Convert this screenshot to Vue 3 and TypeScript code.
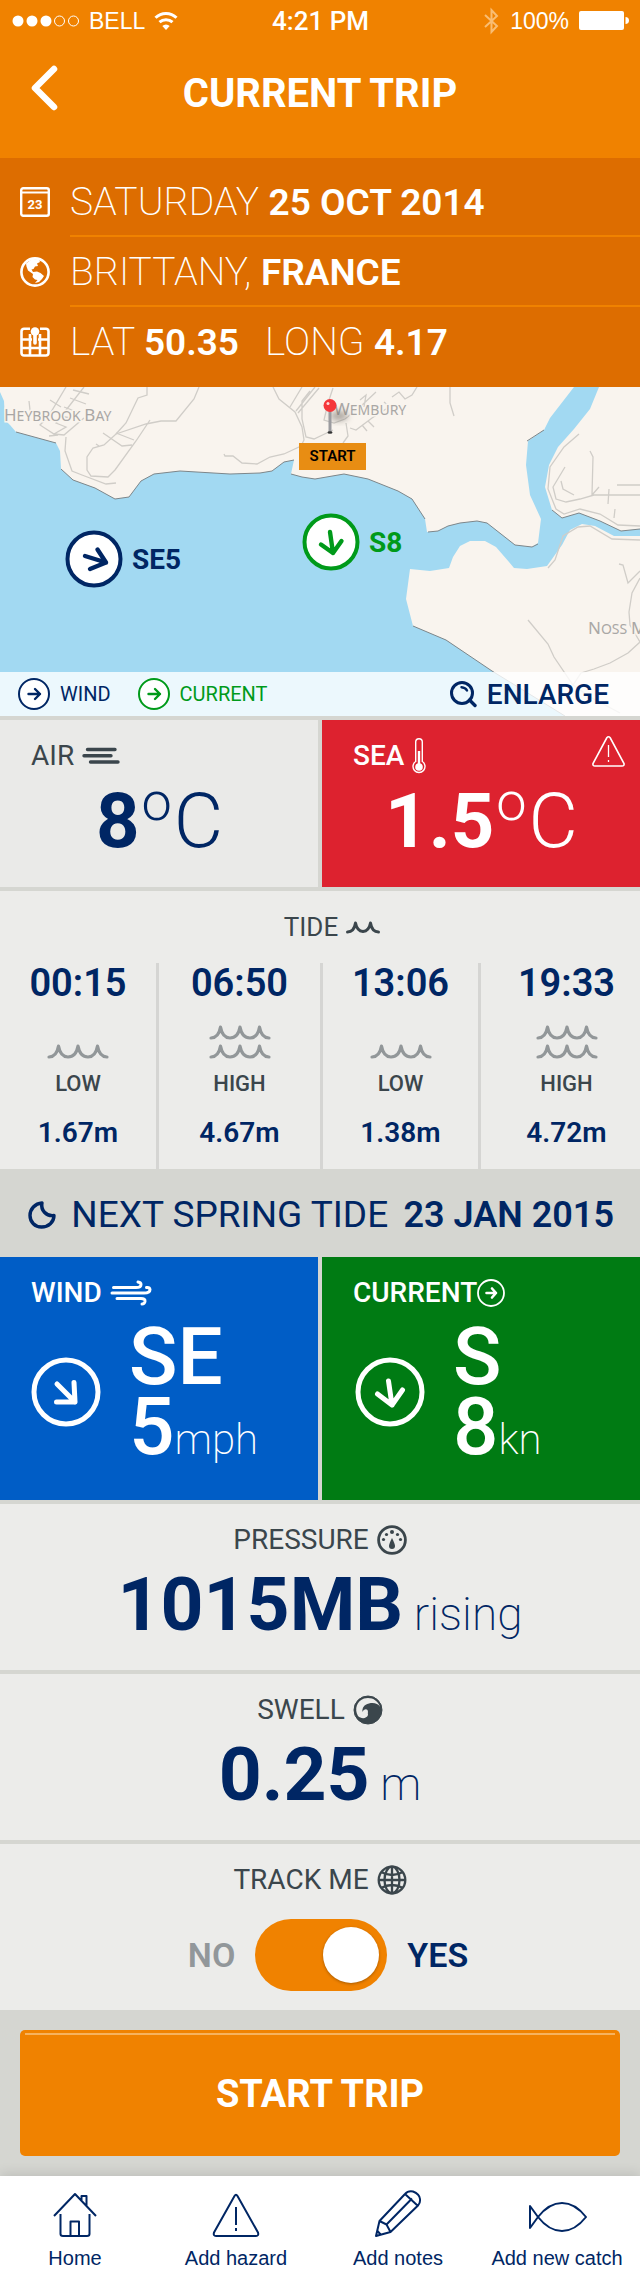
<script setup lang="ts">
import { ref } from 'vue'

interface Tide {
  time: string
  level: 'LOW' | 'HIGH'
  height: string
}

const tides: Tide[] = [
  { time: '00:15', level: 'LOW', height: '1.67m' },
  { time: '06:50', level: 'HIGH', height: '4.67m' },
  { time: '13:06', level: 'LOW', height: '1.38m' },
  { time: '19:33', level: 'HIGH', height: '4.72m' },
]

const tracking = ref(true)
</script>

<template>
  <div class="screen">
    <header class="top">
      <div class="status">
        <div class="status-left">
          <svg class="dots" width="68" height="16" viewBox="0 0 68 16">
            <g fill="#fff"><circle cx="6" cy="8" r="5.5" /><circle cx="20" cy="8" r="5.5" /><circle cx="34" cy="8" r="5.5" /></g>
            <g fill="none" stroke="#fff" stroke-width="1"><circle cx="47.500" cy="8" r="5" /><circle cx="61.500" cy="8" r="5" /></g>
          </svg>
          <span>BELL</span>
          <svg width="24" height="20" viewBox="0 0 24 20">
            <g fill="none" stroke="#fff" stroke-width="3">
              <path d="M1.500 6.800A15 15 0 0 1 22.500 6.800" />
              <path d="M5.500 11.200A9.500 9.500 0 0 1 18.500 11.200" />
            </g>
            <path d="M8.300 15A5.200 5.200 0 0 1 15.700 15L12 19z" fill="#fff" />
          </svg>
        </div>
        <div class="clock">4:21 PM</div>
        <div class="status-right">
          <svg width="17" height="28" viewBox="0 0 17 28" fill="none" stroke="#f9bd73" stroke-width="2">
            <path d="M2 8L14 19L8.500 25V3L14 9L2 20" />
          </svg>
          <span>100%</span>
          <svg width="50" height="20" viewBox="0 0 50 20" fill="#fff">
            <rect x="0" y="0" width="45" height="19" rx="2" />
            <path d="M46.500 6a3.300 3.300 0 0 1 0 7z" />
          </svg>
        </div>
      </div>
      <div class="title-bar">
        <button class="back" type="button" aria-label="Back">
          <svg width="28" height="46" viewBox="0 0 28 46" fill="none" stroke="#fff" stroke-width="6.500" stroke-linecap="round" stroke-linejoin="round">
            <path d="M24 4L5 23L24 42" />
          </svg>
        </button>
        <h1>CURRENT TRIP</h1>
      </div>
    </header>

    <section class="details">
      <div class="detail">
        <svg class="detail-icon" width="30" height="30" viewBox="0 0 30 30">
          <rect x="1.200" y="1.200" width="27.600" height="27.600" rx="2" fill="none" stroke="#fff" stroke-width="2.400" />
          <path d="M2 5.500H28" stroke="#fff" stroke-width="2" />
          <text x="15" y="22" text-anchor="middle" class="day">23</text>
        </svg>
        <p>SATURDAY <b>25 OCT 2014</b></p>
      </div>
      <div class="detail">
        <svg class="detail-icon" width="30" height="30" viewBox="0 0 30 30">
          <circle cx="15" cy="15" r="13.600" fill="none" stroke="#fff" stroke-width="2.600" />
          <path fill="#fff" d="M6 6.500L12 2L19 2.500L20 5L17 6.500L18 9L15 9.500L13.500 12L11.500 12.500L13 15L17 14.500L20.500 16L24 19L22 22L19 25L15 26L17.500 23L15 22.500L12.500 20L13 17L8 13.500L6.500 9.500Z" />
        </svg>
        <p>BRITTANY, <b>FRANCE</b></p>
      </div>
      <div class="detail">
        <svg class="detail-icon" width="30" height="30" viewBox="0 0 30 30" fill="none" stroke="#fff" stroke-width="2.600">
          <path d="M10 1.800H4A2.500 2.500 0 0 0 1.500 4.300V26A2.500 2.500 0 0 0 4 28.500H26A2.500 2.500 0 0 0 28.500 26V4.300A2.500 2.500 0 0 0 26 1.800H20" />
          <path d="M2 12.500H12M18 12.500H28M2 21H28M10 7V28M20 7V28" />
          <circle cx="15" cy="4.500" r="4.300" fill="#fff" stroke="none" />
          <path d="M15 6V16" stroke-width="3.600" stroke-linecap="round" />
        </svg>
        <p>LAT <b>50.35</b><span class="long">LONG <b>4.17</b></span></p>
      </div>
    </section>

    <section class="map">
      <svg class="map-art" viewBox="0 0 640 329" preserveAspectRatio="xMidYMid slice">
        <rect width="640" height="329" fill="#f9f4ee" />
        <path fill="#a2d9f2" d="M0 5L4 14L5 33L10 38L16 45L56 56L60 64L61 82L73 93L95 101L115 112L129 110L141 94L154 87L180 84L230 87L260 86L272 84L284 75L294 73L291 87L302 90L315 92L344 87L368 92L398 104L412 112L425 132L427 145L438 144L448 139L460 136L477 134L487 136L515 158L532 160L538 156L541 132L530 108L526 78L528 54L544 43L550 31L574 0H599L590 22L574 42L558 60L549 78L545 100L552 123L562 131L579 126L600 134L621 144L640 142V149L614 149L595 139L582 137L570 143L562 158L547 179L527 182L514 181L509 175L496 160L485 154L470 154L460 159L453 170L449 181L430 184L410 182L406 212L413 239L446 253L492 284L565 329H0Z" />
        <g fill="none" stroke="#7d868a" stroke-width="1">
          <path d="M16 45L56 56M61 82L73 93L95 101L115 112L129 110L141 94L154 87L180 84L230 87L260 86L272 84L284 75L294 73M291 87L302 90L315 92L344 87L368 92L398 104L412 112L425 132M428 145L438 144L448 139L460 136L477 134L487 136L515 158L532 160L538 157M527 54L544 43M552 123L562 131L579 126L600 134L621 144L640 142M413 239L446 253L492 284L565 329" />
        </g>
        <g fill="none" stroke="#d0cdc8" stroke-width="1.300">
          <path d="M66 0L48 30L40 38L54 47L64 48L84 31M84 0L70 18L56 36L66 40L54 47M73 3L89 7M70 11L86 17M64 20L80 26M60 29L76 32M29 14L30 23L44 30M50 13L61 20M49 49L58 48" />
          <path d="M66 50L65 64L72 84L82 88L106 97L116 96M103 46L122 59L132 58M116 46L134 53M96 57L99 59" />
          <path d="M199 0L194 12L176 34L161 34L146 37L116 47L104 58L93 61L87 70V83L91 89L108 90L115 83L136 54L150 33" />
          <path d="M147 0V8L138 11L126 36L116 47" />
          <path d="M273 0L279 12L295 25L302 40L304 53L301 59L284 67L270 70L257 77L242 76L233 69L225 69L224 67" />
          <path d="M315 0L296 24M319 1L298 26M302 0L290 20M310 4L302 14V32L306 50L314 52L333 43" />
          <path d="M333 1L328 16L324 33L334 36L345 32L360 20L376 5M346 36L348 49L343 56M350 41L356 43L372 31L386 22M362 38L367 44M368 34L374 40M392 10L399 5L405 12L412 8L417 0M360 13L366 8L364 20M384 15L390 20" />
          <path d="M450 0V16L454 29" />
          <path d="M579 47L564 60L550 80L548 102L556 122L564 127L580 122L600 127L618 138L640 139M590 64L593 70L592 108M565 80L553 100L556 112L566 115L580 112L594 108H640M561 94L563 102L574 108M617 98H640M609 102L608 117M615 122L614 131M592 108L599 100" />
          <path d="M548 181L555 173L563 149L578 140L590 139L612 152L640 153M619 177L623 178L628 196L640 184M640 191L632 206L629 225L630 238L640 255L628 266L610 276L594 282L581 286L573 298L554 270L548 257L528 233M573 298L590 310L620 326" />
        </g>
        <g class="place">
          <text x="4" y="34"><tspan class="initial">H</tspan>EYBROOK <tspan class="initial">B</tspan>AY</text>
          <text x="334" y="28"><tspan class="initial">W</tspan>EMBURY</text>
          <text x="588" y="247"><tspan class="initial">N</tspan>OSS <tspan class="initial">M</tspan></text>
        </g>
        <defs>
          <filter id="soft" x="-50%" y="-50%" width="200%" height="200%"><feGaussianBlur stdDeviation="3" /></filter>
        </defs>
        <ellipse cx="339" cy="29" rx="9" ry="5" fill="#6f6a64" opacity=".55" filter="url(#soft)" />
        <rect x="328.500" y="22" width="3" height="23" fill="#9b9b9f" />
        <ellipse cx="330" cy="45.500" rx="2.500" ry="1.200" fill="#333" />
        <circle cx="330" cy="18.500" r="6.500" fill="#f5373a" />
        <circle cx="328" cy="16.500" r="1.500" fill="#ffd9d9" />
      </svg>
      <span class="start">START</span>
      <div class="marker wind-marker">
        <svg width="58" height="58" viewBox="0 0 58 58" fill="#fff" stroke="currentColor" stroke-width="4" stroke-linecap="round" stroke-linejoin="round">
          <circle cx="29" cy="29" r="26.500" />
          <path fill="none" stroke-width="4.400" d="M20 26L41 32.500M32.500 19.500L41 32.500L25 39" />
        </svg>
        <b>SE5</b>
      </div>
      <div class="marker current-marker">
        <svg width="58" height="58" viewBox="0 0 58 58" fill="#fff" stroke="currentColor" stroke-width="4" stroke-linecap="round" stroke-linejoin="round">
          <circle cx="29" cy="29" r="26.500" />
          <path fill="none" stroke-width="4.400" d="M28 19L31 40M19 31.500L31 40L39.500 28" />
        </svg>
        <b>S8</b>
      </div>
      <div class="legend">
        <span class="key navy">
          <svg width="32" height="32" viewBox="0 0 32 32" fill="#fff" stroke="currentColor" stroke-width="2" stroke-linecap="round" stroke-linejoin="round">
            <circle cx="16" cy="16" r="15" /><path fill="none" stroke-width="2.400" d="M10.500 16H22M17 11L22 16L17 21" />
          </svg>
          WIND
        </span>
        <span class="key green">
          <svg width="32" height="32" viewBox="0 0 32 32" fill="#fff" stroke="currentColor" stroke-width="2" stroke-linecap="round" stroke-linejoin="round">
            <circle cx="16" cy="16" r="15" /><path fill="none" stroke-width="2.400" d="M10.500 16H22M17 11L22 16L17 21" />
          </svg>
          CURRENT
        </span>
        <button class="enlarge" type="button">
          <svg width="27" height="27" viewBox="0 0 27 27" fill="none" stroke="currentColor" stroke-linecap="round">
            <circle cx="12" cy="12" r="10.500" stroke-width="3" />
            <path stroke-width="3.400" d="M19.500 19L25 24.500" />
            <path stroke-width="2.400" d="M11.500 6.200Q15.500 6.500 17 9.500" />
          </svg>
          ENLARGE
        </button>
      </div>
    </section>

    <section class="pair temps">
      <div class="tile air">
        <h2>AIR
          <svg width="38" height="18" viewBox="0 0 38 18" stroke="currentColor" stroke-width="3.400" stroke-linecap="round"><path d="M5.500 2.500H33M2 8.800H29M8.500 15H36" /></svg>
        </h2>
        <p class="temp"><b>8</b><sup>o</sup><span>C</span></p>
      </div>
      <div class="tile sea">
        <h2>SEA
          <svg width="14" height="36" viewBox="0 0 14 36">
            <path d="M3.700 23.500V4A3.300 3.300 0 0 1 10.300 4V23.500A6 6 0 1 1 3.700 23.500Z" fill="none" stroke="#fff" stroke-width="1.400" />
            <path d="M7 13V28" stroke="#fff" stroke-width="2.400" /><circle cx="7" cy="29" r="3.800" fill="#fff" />
          </svg>
        </h2>
        <svg class="alert" width="33" height="31" viewBox="0 0 33 31" fill="none" stroke="#fff" stroke-width="1.600">
          <path d="M14.800 1.800Q16.500 -.2 18.200 1.800L32 27.500Q32.500 30 30 30H3Q.5 30 1 27.500Z" />
          <path d="M16.500 9V21M16.500 24V26" stroke-width="1.300" />
        </svg>
        <p class="temp"><b>1.5</b><sup>o</sup><span>C</span></p>
      </div>
    </section>

    <section class="tide">
      <h2>TIDE
        <svg width="34" height="14" viewBox="0 0 34 14" fill="none" stroke="currentColor" stroke-width="3" stroke-linejoin="round" stroke-linecap="round"><path d="M1.500 12Q8 12 9.500 3Q11 11 17 11.500Q23 11 24.500 3Q26 12 32.500 12" /></svg>
      </h2>
      <div class="tide-grid">
        <div v-for="tide in tides" :key="tide.time" class="tide-col">
          <strong class="tide-time">{{ tide.time }}</strong>
          <svg class="waves" width="62" height="42" viewBox="0 0 62 42" fill="none" stroke="#929799" stroke-width="3.200" stroke-linejoin="round" stroke-linecap="round">
            <path v-if="tide.level === 'HIGH'" d="M2 16Q9.500 16 11.500 5Q13.500 16 21 16Q29 16 31 5Q33 16 41 16Q48.500 16 50.500 5Q52.500 16 60 16" />
            <path d="M2 35Q9.500 35 11.500 24Q13.500 35 21 35Q29 35 31 24Q33 35 41 35Q48.500 35 50.500 24Q52.500 35 60 35" />
          </svg>
          <span class="tide-level">{{ tide.level }}</span>
          <strong class="tide-height">{{ tide.height }}</strong>
        </div>
      </div>
    </section>

    <section class="spring">
      <svg width="28" height="28" viewBox="0 0 28 28" fill="none" stroke="currentColor" stroke-width="3.400" stroke-linejoin="round">
        <path d="M14 2C7 2.500 2 8 2 14.500C2 21 7 26 13.500 26C20.500 26 26 21 26 14.500C18 15.500 12.500 9 14 2Z" />
      </svg>
      <p>NEXT SPRING TIDE</p>
      <b>23 JAN 2015</b>
    </section>

    <section class="pair flows">
      <div class="tile wind">
        <h2>WIND
          <svg width="42" height="26" viewBox="0 0 42 26" fill="none" stroke="currentColor" stroke-width="3" stroke-linecap="round">
            <path d="M3.500 7.500H26Q31 7.500 31 4.500Q31 2.500 28 2M2 13H34Q40 13 40 9.500Q39.500 7 36.500 7.500M7 18.500H31Q35.500 18.500 35 21.500Q34.500 24 32 24" />
          </svg>
        </h2>
        <div class="flow">
          <svg width="70" height="70" viewBox="0 0 70 70" fill="none" stroke="#fff" stroke-width="5" stroke-linecap="round" stroke-linejoin="round">
            <circle cx="35" cy="35" r="32" /><path d="M26 27L44 45M43 25.500L44 45L25.500 45" />
          </svg>
          <p><b>SE</b><br><b>5</b><small>mph</small></p>
        </div>
      </div>
      <div class="tile current">
        <h2>CURRENT
          <svg class="tight" width="28" height="28" viewBox="0 0 28 28" fill="none" stroke="#fff" stroke-width="1.800" stroke-linecap="round" stroke-linejoin="round">
            <circle cx="14" cy="14" r="13" /><path stroke-width="2.600" d="M9.500 14H19M15 9.500L19 14L15 18.500" />
          </svg>
        </h2>
        <div class="flow">
          <svg width="70" height="70" viewBox="0 0 70 70" fill="none" stroke="#fff" stroke-width="5" stroke-linecap="round" stroke-linejoin="round">
            <circle cx="35" cy="35" r="32" /><path d="M33.500 24L37 48M22.500 37L37 48L47.500 33" />
          </svg>
          <p><b>S</b><br><b>8</b><small>kn</small></p>
        </div>
      </div>
    </section>

    <section class="panel">
      <h2>PRESSURE
        <svg width="30" height="30" viewBox="0 0 30 30" fill="currentColor">
          <circle cx="15" cy="15" r="13.400" fill="none" stroke="currentColor" stroke-width="2.800" />
          <circle cx="15" cy="7" r="2" /><circle cx="9.500" cy="9.500" r="1.600" /><circle cx="20.500" cy="9.500" r="1.600" /><circle cx="6.500" cy="14.500" r="1.600" /><circle cx="23.500" cy="14.500" r="1.600" />
          <path d="M15 13Q18 19 18 21A3 3 0 0 1 12 21Q12 19 15 13Z" />
        </svg>
      </h2>
      <p class="reading"><b>1015MB</b> <small>rising</small></p>
    </section>

    <section class="panel">
      <h2>SWELL
        <svg width="30" height="30" viewBox="0 0 30 30">
          <circle cx="15" cy="15" r="14" fill="currentColor" stroke="currentColor" />
          <path d="M27 12C25 8 20 7.500 16 8.500C11 9.500 9 13 9.500 17C10.500 14.500 13 13.500 14.500 15C15.500 16.500 14.500 18 15 20C13.500 24 8 24 5 21C1 14 4 6 11 3.500C18 1.500 25 5 27 12Z" fill="#ececea" />
        </svg>
      </h2>
      <p class="reading"><b>0.25</b> <small>m</small></p>
    </section>

    <section class="panel track">
      <h2>TRACK ME
        <svg width="30" height="30" viewBox="0 0 30 30" fill="none" stroke="currentColor" stroke-width="2.300">
          <circle cx="15" cy="15" r="13.300" /><ellipse cx="15" cy="15" rx="7.500" ry="13.300" />
          <path d="M15 1V29M1 15H29M4 7Q15 13 26 7M4 23Q15 17 26 23" />
        </svg>
      </h2>
      <div class="switch-row">
        <span class="no">NO</span>
        <input id="track" v-model="tracking" class="switch" type="checkbox" role="switch">
        <label class="yes" for="track">YES</label>
      </div>
    </section>

    <section class="action">
      <button class="start-trip" type="button">START TRIP</button>
    </section>

    <nav class="nav">
      <a href="#home">
        <svg width="60" height="48" viewBox="0 0 60 48" fill="none" stroke="currentColor" stroke-width="2" stroke-linejoin="round">
          <path d="M9 26L30 4L51 26M15.500 24V44Q15.500 46 18 46H42Q44.500 46 44.500 44V24M25.500 46V31.500H34V46M36.500 10V6H41.500V16" />
        </svg>
        Home
      </a>
      <a href="#hazard">
        <svg width="60" height="48" viewBox="0 0 60 48" fill="none" stroke="currentColor" stroke-width="2" stroke-linejoin="round">
          <path d="M28.500 6Q30 3.500 31.500 6L52 42.500Q53 46 50 46H10Q7 46 8 42.500ZM30 17V35M30 38V41" />
        </svg>
        Add hazard
      </a>
      <a href="#notes">
        <svg width="60" height="48" viewBox="0 0 60 48" fill="none" stroke="currentColor" stroke-width="2" stroke-linejoin="round">
          <path d="M8 46L11.500 31L37 4Q40 .5 45 1.500Q51.500 4 52 9Q52.500 13 50 15.500L22.500 42ZM11.500 31L18.500 34.500L22.500 42M18.500 34.500L44 8.500M37 4L50 16M9.500 41L13 45" />
        </svg>
        Add notes
      </a>
      <a href="#catch">
        <svg width="60" height="48" viewBox="0 0 60 48" fill="none" stroke="currentColor" stroke-width="2" stroke-linejoin="round">
          <path d="M3 16V38L11 27Q22 13 35 13Q48 13 59 27Q48 41 35 41Q22 41 11 27Z" />
        </svg>
        Add new catch
      </a>
    </nav>
  </div>
</template>

<style>
body {
  margin: 0;
}
</style>

<style scoped>
.screen {
  background: #d5d6d1;
  color: #002664;
  font-family: Roboto, "Liberation Sans", sans-serif;
}
svg {
  display: block;
  flex: none;
}
h1,
h2,
p {
  margin: 0;
}
button {
  border: 0;
  padding: 0;
  background: none;
  color: inherit;
  font: inherit;
  cursor: pointer;
}

.top {
  background: #f08200;
  color: #fff;
  padding-bottom: 24px;
}
.status {
  display: grid;
  grid-template-columns: 1fr auto 1fr;
  align-items: center;
  height: 42px;
  padding: 0 11px 0 12px;
  font: 23px/42px "Liberation Sans", sans-serif;
}
.status-left,
.status-right {
  display: flex;
  align-items: center;
}
.status-left {
  gap: 9px;
}
.status-right {
  justify-content: flex-end;
  gap: 10px;
}
.clock {
  font: 500 26px/42px Roboto, sans-serif;
}
.title-bar {
  display: grid;
  grid-template-columns: 60px 1fr 60px;
  align-items: center;
  height: 92px;
}
.back {
  justify-self: end;
  padding: 0 2px 0 0;
}
h1 {
  padding-top: 12px;
  text-align: center;
  font-size: 40px;
  line-height: 56px;
  font-weight: 700;
}

.details {
  background: #dd6d00;
  color: #fff;
  padding: 9px 0 10px;
}
.detail {
  display: flex;
  align-items: center;
  padding-left: 20px;
}
.detail p {
  flex: 1;
  margin-left: 20px;
  padding-top: 2px;
  font-size: 39px;
  line-height: 66px;
  font-weight: 200;
  border-bottom: 2px solid #f08200;
}
.detail:last-child p {
  border-bottom-color: transparent;
}
.detail b {
  font-size: 37px;
  line-height: 1;
  font-weight: 600;
}
.long {
  margin-left: 26px;
}
.day {
  fill: #fff;
  font-size: 13px;
  font-weight: 700;
}

.map {
  position: relative;
  height: 329px;
  overflow: hidden;
}
.map-art {
  position: absolute;
  inset: 0;
  width: 100%;
  height: 100%;
}
.place {
  fill: #a9a7a5;
  stroke: #f9f4ee;
  stroke-width: 3px;
  paint-order: stroke;
  font-family: "Noto Sans", sans-serif;
  font-size: 14px;
}
.initial {
  font-size: 17px;
}
.start {
  position: absolute;
  left: 299px;
  top: 56px;
  width: 67px;
  font-size: 15px;
  line-height: 27px;
  font-weight: 600;
  text-align: center;
  background: #e88d13;
  color: #000;
}
.marker {
  position: absolute;
  display: flex;
  align-items: center;
  gap: 9px;
  font-size: 28px;
}
.marker b {
  font-weight: 700;
}
.wind-marker {
  left: 65px;
  top: 143px;
}
.current-marker {
  left: 302px;
  top: 126px;
  color: #009a1a;
}
.legend {
  position: absolute;
  inset: auto 0 0;
  display: flex;
  align-items: center;
  height: 44px;
  padding: 0 31px 0 18px;
  background: rgba(255, 255, 255, 0.8);
  font-size: 20px;
}
.key {
  display: flex;
  align-items: center;
  gap: 10px;
  margin-right: 27px;
}
.green {
  color: #009a1a;
}
.enlarge {
  display: flex;
  align-items: center;
  gap: 10px;
  margin-left: auto;
  font-size: 28px;
  font-weight: 500;
}

h2 {
  display: flex;
  align-items: center;
  gap: 8px;
  font-size: 28px;
  line-height: 36px;
  font-weight: 400;
  color: #3b464c;
}
.pair {
  display: grid;
  grid-template-columns: 1fr 1fr;
  gap: 4px;
}
.temps {
  margin: 4px 0;
}
.tile {
  position: relative;
  padding: 18px 30px 18px 31px;
}
.temps .tile {
  padding-bottom: 22px;
  background: #eaeae8;
}
.temps .tile.sea {
  background: #dd222f;
  color: #fff;
}
.sea h2,
.flows h2 {
  color: #fff;
  font-weight: 500;
}
.alert {
  position: absolute;
  right: 15px;
  top: 16px;
}
.temp {
  display: flex;
  justify-content: center;
  align-items: flex-start;
  margin-top: 3px;
  font-size: 76px;
  line-height: 88px;
  font-weight: 300;
}
.temp sup {
  margin: 0 2px;
  font-size: 54px;
  line-height: 50px;
}
.temp b {
  font-weight: 700;
}

.tide {
  background: #ececea;
  padding-top: 18px;
}
.tide h2 {
  justify-content: center;
  padding-left: 24px;
  font-size: 26px;
}
.tide-grid {
  display: grid;
  grid-template-columns: 156fr 164fr 158fr 162fr;
  margin-top: 18px;
}
.tide-col {
  display: flex;
  flex-direction: column;
  align-items: center;
  padding-bottom: 20px;
}
.tide-col + .tide-col {
  border-left: 3px solid #d5d5d3;
}
.tide-col:last-child {
  padding-left: 12px;
}
.tide-time {
  font-size: 38px;
  line-height: 40px;
  font-weight: 600;
}
.waves {
  margin-top: 19px;
}
.tide-level {
  margin-top: 6px;
  font-size: 22px;
  line-height: 28px;
  font-weight: 500;
  color: #3b464c;
}
.tide-height {
  margin-top: 19px;
  font-size: 28px;
  line-height: 32px;
  font-weight: 600;
}

.spring {
  display: flex;
  align-items: center;
  justify-content: space-between;
  padding: 4px 26px 0 28px;
  font-size: 37px;
  line-height: 84px;
}
.spring b {
  font-size: 36px;
  font-weight: 600;
}

.flows {
  color: #fff;
}
.flows .tile {
  padding-bottom: 38px;
}
.tile.wind {
  background: #005dc6;
}
.tile.current {
  background: #007b13;
}
h2 .tight {
  margin-left: -8px;
}
.flow {
  display: flex;
  align-items: center;
  gap: 28px;
  margin-top: 11px;
}
.current .flow {
  padding-left: 2px;
}
.flow p {
  font-size: 80px;
  line-height: 70px;
}
.flow b {
  font-weight: 500;
}
small {
  font-size: 42px;
  line-height: 1;
  font-weight: 200;
}

.panel {
  height: 148px;
  padding-top: 18px;
  margin-top: 4px;
  background: #ececea;
  text-align: center;
}
.panel h2 {
  justify-content: center;
}
.reading {
  font-size: 75px;
  line-height: 92px;
}
.reading small {
  margin-left: -8px;
  font-size: 46px;
}
.switch-row {
  display: flex;
  align-items: center;
  justify-content: center;
  gap: 20px;
  margin-top: 21px;
  padding-left: 16px;
  font-size: 34px;
  font-weight: 600;
}
.no {
  color: #92979a;
}
.switch {
  appearance: none;
  display: flex;
  align-items: center;
  width: 132px;
  height: 72px;
  margin: 0;
  padding: 0 8px;
  border-radius: 36px;
  background: #b9bbbc;
  cursor: pointer;
}
.switch::before {
  content: "";
  width: 56px;
  height: 56px;
  border-radius: 50%;
  background: #fff;
  box-shadow: 0 1px 3px rgba(0, 0, 0, 0.3);
}
.switch:checked {
  justify-content: flex-end;
  background: #f08200;
}

.action {
  padding: 20px;
}
.start-trip {
  display: block;
  width: 100%;
  padding: 3px 5px;
  border-radius: 5px;
  background: #f08200;
  color: #fff;
  font-size: 38px;
  line-height: 118px;
  font-weight: 700;
}
.start-trip::before {
  content: "";
  display: block;
  height: 2px;
  background: #f6b25e;
}

.nav {
  display: grid;
  grid-template-columns: 150fr 172fr 152fr 166fr;
  height: 98px;
  background: #fff;
  box-shadow: 0 -2px 12px rgba(0, 0, 0, 0.12);
}
.nav a {
  display: flex;
  flex-direction: column;
  align-items: center;
  padding-top: 14px;
  color: #002664;
  font: 20px/40px "Liberation Sans", sans-serif;
  text-decoration: none;
  white-space: nowrap;
}
</style>
